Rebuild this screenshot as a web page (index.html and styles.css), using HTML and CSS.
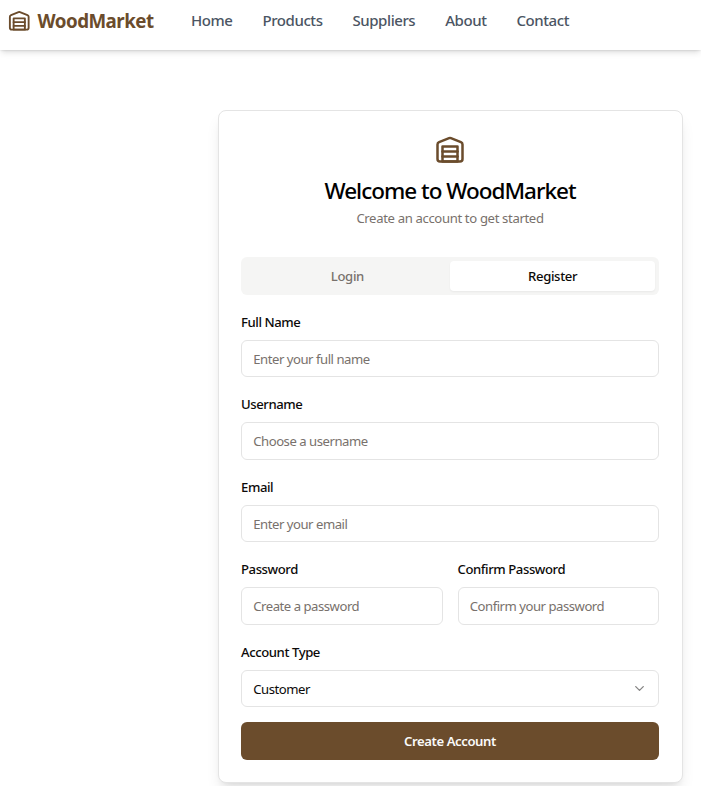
FILE: index.html
```html
<!DOCTYPE html>
<html lang="en">
<head>
<meta charset="utf-8">
<title>WoodMarket</title>
<link rel="stylesheet" href="styles.css">
</head>
<body>
<svg class="sprite" aria-hidden="true">
  <symbol id="warehouse" viewBox="0 0 24 24">
    <path d="M22 8.35V20a2 2 0 0 1-2 2H4a2 2 0 0 1-2-2V8.35A2 2 0 0 1 3.26 6.5l8-3.2a2 2 0 0 1 1.48 0l8 3.2A2 2 0 0 1 22 8.35Z"/>
    <path d="M6 18h12"/><path d="M6 14h12"/><rect width="12" height="12" x="6" y="10"/>
  </symbol>
</svg>
<header class="navbar">
  <a class="brand"><svg class="icon brand-icon"><use href="#warehouse"/></svg><span>WoodMarket</span></a>
  <nav class="links"><a>Home</a><a>Products</a><a>Suppliers</a><a>About</a><a>Contact</a></nav>
</header>
<main>
  <section class="card">
    <div class="card-header">
      <svg class="icon card-icon"><use href="#warehouse"/></svg>
      <h1>Welcome to WoodMarket</h1>
      <p>Create an account to get started</p>
    </div>
    <div class="tabs"><button class="tab">Login</button><button class="tab active">Register</button></div>
    <form>
      <div class="field"><label for="name">Full Name</label><input id="name" placeholder="Enter your full name"></div>
      <div class="field"><label for="user">Username</label><input id="user" placeholder="Choose a username"></div>
      <div class="field"><label for="email">Email</label><input id="email" placeholder="Enter your email"></div>
      <div class="row">
        <div class="field"><label for="pass">Password</label><input id="pass" type="password" placeholder="Create a password"></div>
        <div class="field"><label for="confirm">Confirm Password</label><input id="confirm" type="password" placeholder="Confirm your password"></div>
      </div>
      <div class="field"><label>Account Type</label>
        <button type="button" class="select"><span>Customer</span><svg class="icon chevron" viewBox="0 0 24 24"><path d="m6 9 6 6 6-6"/></svg></button>
      </div>
      <button type="button" class="submit">Create Account</button>
    </form>
  </section>
</main>
</body>
</html>
```
FILE: styles.css
```css
* { box-sizing: border-box; margin: 0; }
html { font-size: 15px; }
body {
  font-family: "Noto Sans", "Open Sans", sans-serif;
  background: #fff;
  color: #0c0a09;
  height: 786px;
  overflow: hidden;
}
button, input { font: inherit; color: inherit; }
.sprite { display: none; }
.icon { fill: none; stroke: currentColor; stroke-width: 2; stroke-linecap: round; stroke-linejoin: round; flex: none; }
.navbar {
  display: flex;
  align-items: center;
  height: 50px;
  padding: 0 0 10px 7.5px;
  background: #fff;
  box-shadow: 0 4px 6px -1px rgb(0 0 0 / .1), 0 2px 4px -2px rgb(0 0 0 / .1), 0 0 2px rgb(0 0 0 / .12);
}
.brand { display: flex; align-items: center; gap: 7.5px; width: 183.5px; color: #6b4c2c; font-size: 18.75px; font-weight: 700; letter-spacing: -.52px; }
.brand-icon { width: 22.5px; height: 22.5px; margin-top: 1px; }
.links { display: flex; gap: 29.9px; color: #4b5563; font-size: 15px; font-weight: 500; letter-spacing: -.42px; }
.card {
  width: 464.5px;
  height: 672.5px;
  margin: 60px 0 0 218.25px;
  padding: 23.75px 22.75px 0 21.75px;
  border: 1px solid #e4e4e4;
  border-radius: 8px;
  background: #fff;
  box-shadow: 0 10px 15px -3px rgb(0 0 0 / .1), 0 4px 6px -4px rgb(0 0 0 / .1);
}
.card-header { display: flex; flex-direction: column; align-items: center; height: 122.5px; }
.card-icon { width: 30px; height: 30px; margin-top: -.5px; color: #6b4c2c; }
h1 { margin-top: 12px; font-size: 22.5px; line-height: 30px; font-weight: 500; letter-spacing: -1px; color: #000; }
.card-header p { margin-top: 2px; font-size: 13.125px; line-height: 20px; color: #78716c; letter-spacing: -.35px; }
.tabs { display: grid; grid-template-columns: 1fr 1fr; height: 37.5px; padding: 3.75px; border-radius: 6px; background: #f5f5f4; }
.tab { border: 0; border-radius: 4px; background: none; color: #78716c; font-size: 13.125px; font-weight: 500; letter-spacing: -.35px; }
.tab.active { background: #fff; color: #0c0a09; box-shadow: 0 1px 2px rgb(0 0 0 / .05); }
form { display: flex; flex-direction: column; gap: 15px; margin-top: 15px; }
.field { display: flex; flex-direction: column; gap: 7.5px; min-width: 0; }
.row { display: grid; grid-template-columns: 1fr 1fr; gap: 15px; }
label { height: 22.5px; line-height: 25px; font-size: 13.125px; font-weight: 500; letter-spacing: -.42px; }
input, .select {
  width: 100%;
  height: 37.5px;
  padding: 0 11.25px;
  border: 1px solid #e4e4e4;
  border-radius: 6px;
  background: #fff;
  font-size: 13.125px;
  letter-spacing: -.47px;
}
input::placeholder { color: #78716c; opacity: 1; }
.select { display: flex; align-items: center; justify-content: space-between; }
.chevron { width: 15px; height: 15px; opacity: .5; }
.submit { height: 37.5px; border: 0; border-radius: 6px; background: #6b4c2c; color: #fafaf9; font-size: 13.125px; font-weight: 600; letter-spacing: -.42px; }
```
